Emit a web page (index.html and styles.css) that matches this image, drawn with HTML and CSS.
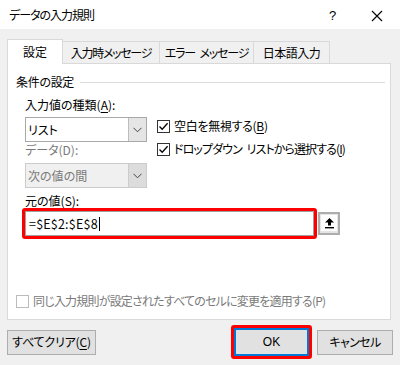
FILE: index.html
```html
<!DOCTYPE html>
<html lang="ja">
<head>
<meta charset="utf-8">
<link rel="stylesheet" href="styles.css">
</head>
<body>
<div class="dialog">
  <div class="titlebar">
    <span class="title">データの入力規則</span>
    <span class="help">?</span>
    <span class="close"><svg width="12" height="12" viewBox="0 0 12 12"><path d="M1 1 L11 11 M11 1 L1 11" stroke="#000" stroke-width="1.1" fill="none"/></svg></span>
  </div>
  <div class="body">
    <div class="tabs">
      <div class="tab active t1">設定</div>
      <div class="tab t2">入力時メッセージ</div>
      <div class="tab t3">エラー メッセージ</div>
      <div class="tab t4">日本語入力</div>
    </div>
    <div class="panel">
      <div class="group-title"><span>条件の設定</span></div>
      <div class="cond">
        <div class="left">
          <div class="label">入力値の種類(<u>A</u>):</div>
          <div class="combo">
            <span class="val">リスト</span>
            <span class="drop"><svg width="9" height="6" viewBox="0 0 9 6"><path d="M0.5 0.8 L4.5 4.8 L8.5 0.8" stroke="#444" stroke-width="1" fill="none"/></svg></span>
          </div>
          <div class="label dis">データ(D):</div>
          <div class="combo disabled">
            <span class="val">次の値の間</span>
            <span class="drop"><svg width="9" height="6" viewBox="0 0 9 6"><path d="M0.5 0.8 L4.5 4.8 L8.5 0.8" stroke="#444" stroke-width="1" fill="none"/></svg></span>
          </div>
        </div>
        <div class="right">
          <div class="check c1"><span class="box"><svg width="11" height="11" viewBox="0 0 11 11"><path d="M1.5 5.5 L4.2 8.3 L9.6 2.2" stroke="#000" stroke-width="1.3" fill="none"/></svg></span>空白を無視する(<u>B</u>)</div>
          <div class="check c2"><span class="box"><svg width="11" height="11" viewBox="0 0 11 11"><path d="M1.5 5.5 L4.2 8.3 L9.6 2.2" stroke="#000" stroke-width="1.3" fill="none"/></svg></span>ドロップダウン リストから選択する(<u>I</u>)</div>
        </div>
      </div>
      <div class="label src">元の値(<u>S</u>):</div>
      <div class="source-row">
        <div class="hl">
          <div class="input">=$E$2:$E$8<span class="caret"></span></div>
        </div>
        <div class="ref"><span class="ref-inner"><svg width="11" height="12" viewBox="0 0 11 12"><path d="M5.5 1 L10 5.5 L7 5.5 L7 8.5 L4 8.5 L4 5.5 L1 5.5 Z" fill="#000"/><rect x="1" y="10" width="9" height="1.4" fill="#000"/></svg></span></div>
      </div>
      <div class="check apply dis"><span class="box off"></span>同じ入力規則が設定されたすべてのセルに変更を適用する(P)</div>
    </div>
    <div class="footer">
      <div class="btn clear">すべてクリア(<u>C</u>)</div>
      <div class="right-btns">
        <div class="ok-hl"><div class="btn ok">OK</div></div>
        <div class="btn cancel">キャンセル</div>
      </div>
    </div>
  </div>
</div>
</body>
</html>
```

FILE: styles.css
```css
* { box-sizing: border-box; }
html, body { margin: 0; padding: 0; }
body {
  width: 400px;
  height: 365px;
  background: #f0f0f0;
  font-family: "Noto Sans CJK JP", "Noto Sans", sans-serif;
  font-size: 12px;
  font-feature-settings: "palt";
  color: #000;
  overflow: hidden;
}
u { text-decoration: underline; text-underline-offset: 2px; }
.dialog { width: 400px; height: 365px; }
.titlebar {
  height: 29px;
  background: #fff;
  display: flex;
  align-items: center;
  padding: 1px 0 0 9px;
}
.title { flex: 1; line-height: 16px; letter-spacing: -1px; }
.help { width: 30px; text-align: left; font-size: 13px; font-family: "Liberation Sans", sans-serif; margin-right: 12px; }
.close { width: 29px; display: flex; align-items: center; padding-top: 1px; }
.body { padding: 10px 10px 0 7px; }
.tabs {
  display: flex;
  align-items: flex-end;
  height: 24px;
}
.tab {
  height: 22px;
  border: 1px solid #d9d9d9;
  border-bottom: none;
  background: #f0f0f0;
  display: flex;
  align-items: center;
  justify-content: center;
  line-height: 16px;
  margin-left: -1px;
  padding-top: 1px;
  white-space: pre;
}
.tab.t1 { width: 56px; margin-left: 0; }
.tab.t2 { width: 98px; letter-spacing: -1.3px; }
.tab.t3 { width: 95px; letter-spacing: -1.2px; word-spacing: 3px; }
.tab.t4 { width: 77px; letter-spacing: -0.5px; }
.tab.active {
  height: 25px;
  margin-bottom: -1px;
  background: #fff;
  position: relative;
  z-index: 1;
  padding-top: 0;
}
.panel {
  width: 384px;
  height: 257px;
  background: #fff;
  border: 1px solid #d9d9d9;
}
.group-title {
  margin-top: 10px;
  padding-left: 8px;
  display: flex;
  align-items: center;
  line-height: 16px;
  letter-spacing: -0.3px;
}
.group-title::after {
  content: "";
  flex: 1;
  height: 1px;
  background: #dcdcdc;
  margin: 0 5px 0 6px;
}
.label { line-height: 16px; }
.dis { color: #7a7a7a; }
.cond {
  display: flex;
  margin: 7px 0 0 17px;
}
.left { width: 122px; }
.combo {
  height: 25px;
  margin-top: 4px;
  border: 1px solid #a8a8a8;
  display: flex;
  align-items: stretch;
  background: #fff;
}
.combo .val { flex: 1; padding-left: 2px; display: flex; align-items: center; line-height: 16px; }
.combo .drop {
  width: 18px;
  background: #e5e5e5;
  border-left: 1px solid #bcbcbc;
  display: flex;
  align-items: center;
  justify-content: center;
}
.combo.disabled {
  margin-top: 5px;
  border-color: #cccccc;
  background: #f0f0f0;
  color: #7a7a7a;
}
.combo.disabled .drop { background: #dcdcdc; border-left-color: #cccccc; }
.right { margin-left: 10px; padding-top: 21px; }
.check {
  display: flex;
  align-items: center;
  line-height: 16px;
  white-space: pre;
}
.check.c1 { letter-spacing: -0.3px; }
.check.c2 { margin-top: 7px; letter-spacing: -0.9px; word-spacing: 3px; }
.box {
  width: 13px;
  height: 13px;
  border: 1px solid #333;
  background: #fff;
  margin-right: 4px;
  display: flex;
  align-items: center;
  justify-content: center;
}
.box.off { border-color: #bcbcbc; }
.label.src { margin: 6px 0 0 17px; line-height: 14px; }
.source-row {
  display: flex;
  align-items: center;
  margin-left: 14px;
}
.hl {
  width: 295px;
  height: 31px;
  border: 3px solid #ff0000;
  border-radius: 3px;
}
.input {
  height: 25px;
  border: 1px solid #a0a0a0;
  display: flex;
  align-items: center;
  padding-left: 3px;
  font-size: 12.5px;
  letter-spacing: 0.2px;
}
.caret {
  display: inline-block;
  width: 1px;
  height: 14px;
  background: #000;
  margin-left: 1px;
}
.ref {
  width: 22px;
  height: 23px;
  margin-left: 1px;
  border: 2px solid #adadad;
  background: #e5e5e5;
  display: flex;
  align-items: flex-start;
  justify-content: center;
  padding-top: 1px;
}
.ref-inner {
  width: 16px;
  height: 16px;
  background: #fff;
  display: flex;
  align-items: center;
  justify-content: center;
}
.check.apply { margin: 54px 0 0 8px; letter-spacing: -0.8px; }
.footer {
  display: flex;
  align-items: center;
  margin-top: 5px;
}
.btn {
  height: 25px;
  background: #e1e1e1;
  border: 1px solid #adadad;
  display: flex;
  align-items: center;
  justify-content: center;
  line-height: 16px;
}
.btn.clear { width: 89px; letter-spacing: -0.2px; }
.right-btns { margin-left: auto; display: flex; align-items: center; margin-right: -3px; }
.ok-hl {
  border: 3px solid #ff0000;
  border-radius: 3px;
}
.btn.ok {
  width: 75px;
  height: 28px;
  border: 2px solid #0078d7;
  font-family: "Liberation Sans", sans-serif;
}
.btn.cancel { width: 76px; margin-left: 5px; letter-spacing: -0.6px; }
```
